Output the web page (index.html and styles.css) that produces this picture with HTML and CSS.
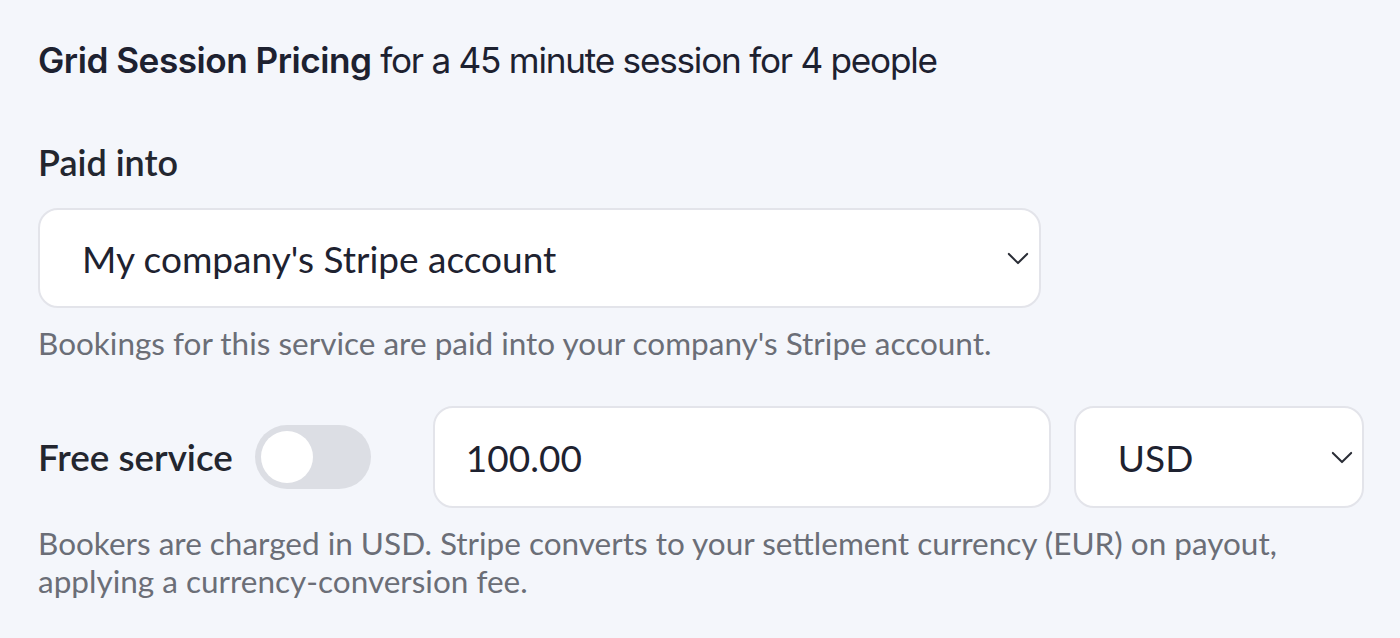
FILE: index.html
```html
<!DOCTYPE html>
<html lang="en">
<head>
  <meta charset="UTF-8" />
  <meta name="viewport" content="width=device-width, initial-scale=1.0" />
  <title>Grid Session Pricing</title>
  <link rel="stylesheet" href="styles.css">
</head>
<body>
  <div class="pricing">
    <h2 class="title"><strong>Grid Session Pricing</strong> for a 45 minute session for 4 people</h2>

    <div class="field">
      <label class="label">Paid into</label>
      <div class="select wide">
        <span>My company's Stripe account</span>
        <svg class="chevron" viewBox="0 0 24 14" width="22" height="13"><path d="M2 2l10 10 10-10" fill="none" stroke="#2a2d36" stroke-width="2.2" stroke-linecap="round" stroke-linejoin="round"/></svg>
      </div>
      <p class="help">Bookings for this service are paid into your company's Stripe account.</p>
    </div>

    <div class="field">
      <div class="price-row">
        <span class="label inline">Free service</span>
        <label class="toggle">
          <input type="checkbox">
          <span class="track"></span>
        </label>
        <div class="input amount">100.00</div>
        <div class="select currency">
          <span>USD</span>
          <svg class="chevron" viewBox="0 0 24 14" width="22" height="13"><path d="M2 2l10 10 10-10" fill="none" stroke="#2a2d36" stroke-width="2.2" stroke-linecap="round" stroke-linejoin="round"/></svg>
        </div>
      </div>
      <p class="help">Bookers are charged in USD. Stripe converts to your settlement currency (EUR) on payout,<br>applying a currency-conversion fee.</p>
    </div>
  </div>
</body>
</html>
```

FILE: styles.css
```css
body {
  margin: 0;
  background: #f4f6fb;
  font-family: 'Lato', 'Noto Sans', sans-serif;
  color: #1e2230;
}

.pricing {
  padding: 38px 0 0 38px;
  display: flex;
  flex-direction: column;
}

.title {
  margin: 0;
  font-family: 'Inter', sans-serif;
  font-size: 35.2px;
  line-height: 44px;
  font-weight: 400;
  letter-spacing: -1.25px;
  color: #1d2130;
}

.title strong {
  font-weight: 600;
  letter-spacing: -0.5px;
}

.field {
  display: flex;
  flex-direction: column;
}

.label {
  margin-top: 58px;
  font-size: 36px;
  line-height: 44px;
  font-weight: 600;
  color: #23262f;
}

.label.inline {
  margin-top: 0;
  font-size: 36.8px;
  white-space: nowrap;
  flex-shrink: 0;
}

.select,
.input {
  box-sizing: border-box;
  flex-shrink: 0;
  background: #fff;
  border: 2px solid #e3e4ea;
  border-radius: 20px;
  font-size: 37px;
  color: #1e2230;
  display: flex;
  align-items: center;
}

.select {
  justify-content: space-between;
}

.select.wide {
  margin-top: 24px;
  width: 1003px;
  height: 100px;
  padding: 0 10px 0 42px;
}

.chevron {
  flex-shrink: 0;
}

.help {
  margin: 16px 0 0;
  font-size: 31.5px;
  line-height: 38px;
  color: #6b6e77;
}

.price-row {
  margin-top: 44px;
  display: flex;
  align-items: center;
}

.toggle {
  margin-left: 22px;
  flex-shrink: 0;
  position: relative;
  display: inline-block;
  width: 116px;
  height: 64px;
}

.toggle input {
  opacity: 0;
  width: 0;
  height: 0;
}

.track {
  position: absolute;
  inset: 0;
  background: #dcdee4;
  border-radius: 32px;
}

.track::before {
  content: "";
  position: absolute;
  left: 6px;
  top: 6px;
  width: 52px;
  height: 52px;
  border-radius: 50%;
  background: #fff;
}

.input.amount {
  margin-left: 62px;
  width: 618px;
  height: 102px;
  padding: 0 31px;
}

.select.currency {
  margin-left: 23px;
  width: 290px;
  height: 102px;
  padding: 0 9px 0 42px;
}
```
